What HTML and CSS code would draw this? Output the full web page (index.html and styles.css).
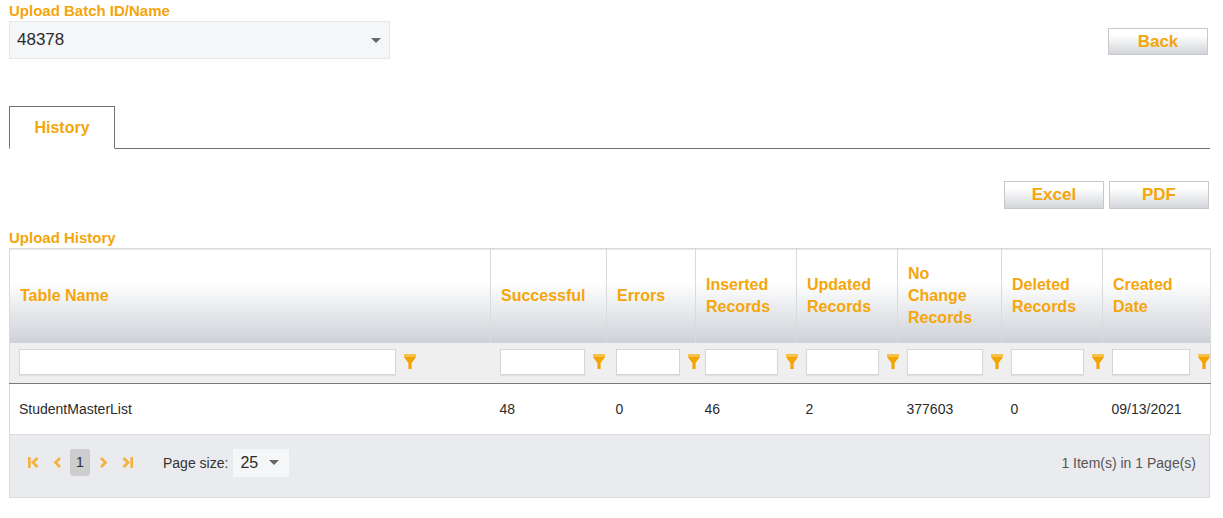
FILE: index.html
```html
<!DOCTYPE html>
<html lang="en">
<head>
  <meta charset="UTF-8" />
  <meta name="viewport" content="width=device-width, initial-scale=1.0"/>
  <title>Upload History</title>
  <link rel="stylesheet" href="styles.css">
</head>
<body>
  <div class="page">
    <!-- Batch selector -->
    <div class="top-row">
      <div class="batch">
        <label class="field-label">Upload Batch ID/Name</label>
        <div class="select batch-select">
          <span>48378</span>
          <span class="caret"></span>
        </div>
      </div>
      <button class="btn back-btn">Back</button>
    </div>

    <!-- Tabs -->
    <div class="tabs">
      <div class="tab active">History</div>
    </div>

    <div class="export-row">
      <button class="btn">Excel</button>
      <button class="btn">PDF</button>
    </div>

    <h3 class="field-label section-title">Upload History</h3>

    <table class="grid">
      <colgroup>
        <col style="width:481px">
        <col style="width:116px">
        <col style="width:89px">
        <col style="width:101px">
        <col style="width:101px">
        <col style="width:104px">
        <col style="width:101px">
        <col style="width:108px">
      </colgroup>
      <thead>
        <tr class="head-row">
          <th>Table Name</th>
          <th>Successful</th>
          <th>Errors</th>
          <th>Inserted Records</th>
          <th>Updated Records</th>
          <th>No Change Records</th>
          <th>Deleted Records</th>
          <th>Created Date</th>
        </tr>
        <tr class="filter-row" id="filterRow"></tr>
      </thead>
      <tbody>
        <tr class="data-row">
          <td>StudentMasterList</td>
          <td>48</td>
          <td>0</td>
          <td>46</td>
          <td>2</td>
          <td>377603</td>
          <td>0</td>
          <td>09/13/2021</td>
        </tr>
      </tbody>
    </table>

    <div class="pager">
      <div class="pager-left">
        <span class="nav-btn">
          <svg width="11" height="11" viewBox="0 0 11 11"><path d="M1.3 0V11" stroke="#f5b13a" stroke-width="2.6" fill="none"/><path d="M9.5 1L4.8 5.5L9.5 10" stroke="#f5b13a" stroke-width="2.6" fill="none"/></svg>
        </span>
        <span class="nav-btn">
          <svg width="9" height="11" viewBox="0 0 9 11"><path d="M7 1L2.5 5.5L7 10" stroke="#f5b13a" stroke-width="2.6" fill="none"/></svg>
        </span>
        <span class="page-num">1</span>
        <span class="nav-btn">
          <svg width="9" height="11" viewBox="0 0 9 11"><path d="M2 1L6.5 5.5L2 10" stroke="#f5b13a" stroke-width="2.6" fill="none"/></svg>
        </span>
        <span class="nav-btn">
          <svg width="11" height="11" viewBox="0 0 11 11"><path d="M1.5 1L6.2 5.5L1.5 10" stroke="#f5b13a" stroke-width="2.6" fill="none"/><path d="M9.7 0V11" stroke="#f5b13a" stroke-width="2.6" fill="none"/></svg>
        </span>
        <span class="page-size-label">Page size:</span>
        <div class="select size-select">
          <span>25</span>
          <span class="caret"></span>
        </div>
      </div>
      <div class="pager-info">1 Item(s) in 1 Page(s)</div>
    </div>
  </div>

  <script>
    // Fila de filtros: un input y un embudo por columna
    const filterRow = document.getElementById("filterRow");
    const funnel = '<svg class="funnel" width="12" height="15" viewBox="0 0 12 15">' +
      '<path d="M0 0H12V3H0Z" fill="#f9c14a"/>' +
      '<path d="M0 3H12L7.6 9V15H4.4V9Z" fill="#f2a400"/></svg>';

    for (let i = 0; i < 8; i++) {
      const td = document.createElement("td");
      td.innerHTML = '<div class="filter"><input type="text" />' + funnel + '</div>';
      filterRow.appendChild(td);
    }
  </script>
</body>
</html>
```

FILE: styles.css
```css
body {
  margin: 0;
  font-family: 'Liberation Sans', Arial, sans-serif;
  background-color: #fff;
  color: #2b2b2b;
}

.page {
  width: 1201px;
  padding: 2px 0 0 9px;
}

.field-label {
  display: block;
  margin: 0;
  font-size: 15px;
  line-height: 17px;
  font-weight: bold;
  color: #f4a60a;
}

.top-row {
  display: flex;
  justify-content: space-between;
  align-items: flex-start;
}

.select {
  display: flex;
  align-items: center;
  justify-content: space-between;
  box-sizing: border-box;
  background-color: #f5f6f8;
  color: #2b2b2b;
}

.batch-select {
  width: 381px;
  height: 38px;
  margin-top: 2px;
  padding: 0 8px 0 7px;
  border: 1px solid #e4e7eb;
  font-size: 17px;
}

.caret {
  width: 0;
  height: 0;
  border-left: 5px solid transparent;
  border-right: 5px solid transparent;
  border-top: 5px solid #666;
}

.btn {
  width: 100px;
  height: 28px;
  padding: 0;
  border: 1px solid #c8c8c8;
  background: linear-gradient(#ffffff 25%, #d2d5da);
  color: #f4a60a;
  font-family: 'Liberation Sans', Arial, sans-serif;
  font-size: 17px;
  font-weight: bold;
  cursor: pointer;
}

.back-btn {
  height: 27px;
  margin: 26px 2px 0 0;
}

.tabs {
  display: flex;
  margin-top: 47px;
  border-bottom: 1px solid #6d7278;
}

.tab {
  width: 104px;
  height: 41px;
  margin-bottom: -1px;
  border: 1px solid #6d7278;
  border-bottom: 1px solid #fff;
  text-align: center;
  line-height: 42px;
  font-size: 16px;
  font-weight: bold;
  color: #f4a60a;
  background-color: #fff;
}

.export-row {
  display: flex;
  justify-content: flex-end;
  gap: 5px;
  margin-top: 32px;
  padding-right: 1px;
}

.section-title {
  margin-top: 20px;
}

.grid {
  width: 1201px;
  margin-top: 2px;
  border-collapse: collapse;
  table-layout: fixed;
  border: 1px solid #dcdcdc;
  border-bottom: none;
}

.head-row th {
  height: 94px;
  padding: 0 10px;
  text-align: left;
  vertical-align: middle;
  font-size: 16px;
  line-height: 22px;
  font-weight: bold;
  color: #f4a60a;
  border-left: 1px solid #d9dbde;
  background: linear-gradient(#ffffff 35%, #cdd0d7);
}

.filter-row td {
  height: 40px;
  padding: 0 0 0 9px;
  background-color: #efefef;
  border-bottom: 1px solid #7a7a7a;
  vertical-align: middle;
}

.filter {
  display: flex;
  align-items: center;
  margin-top: -3px;
}

.filter input {
  flex: none;
  width: 80%;
  height: 26px;
  box-sizing: border-box;
  border: 1px solid #d6d6d6;
  box-shadow: 0 1px 1px rgba(0,0,0,0.06);
  background-color: #fff;
}

.funnel {
  flex: none;
  margin-left: 8px;
}

.data-row td {
  height: 50px;
  padding: 0 0 0 9px;
  font-size: 14px;
  color: #2b2b2b;
  border-bottom: 1px solid #dcdcdc;
}

.pager {
  display: flex;
  justify-content: space-between;
  align-items: center;
  box-sizing: border-box;
  width: 1201px;
  height: 63px;
  padding: 0 13px 7px 12px;
  border: 1px solid #dcdcdc;
  border-top: none;
  background-color: #e9ebef;
}

.pager-left {
  display: flex;
  align-items: center;
  gap: 2px;
}

.nav-btn {
  display: flex;
  justify-content: center;
  align-items: center;
  width: 22px;
  height: 27px;
}

.page-num {
  width: 20px;
  height: 27px;
  line-height: 27px;
  text-align: center;
  border-radius: 3px;
  background-color: #cdcdcd;
  font-size: 14px;
  color: #2b2b2b;
}

.page-size-label {
  margin-left: 23px;
  font-size: 14px;
  color: #333;
}

.size-select {
  width: 56px;
  height: 28px;
  margin-left: 3px;
  padding: 0 10px 0 7px;
  font-size: 16px;
}

.pager-info {
  font-size: 14px;
  color: #555;
}
```
